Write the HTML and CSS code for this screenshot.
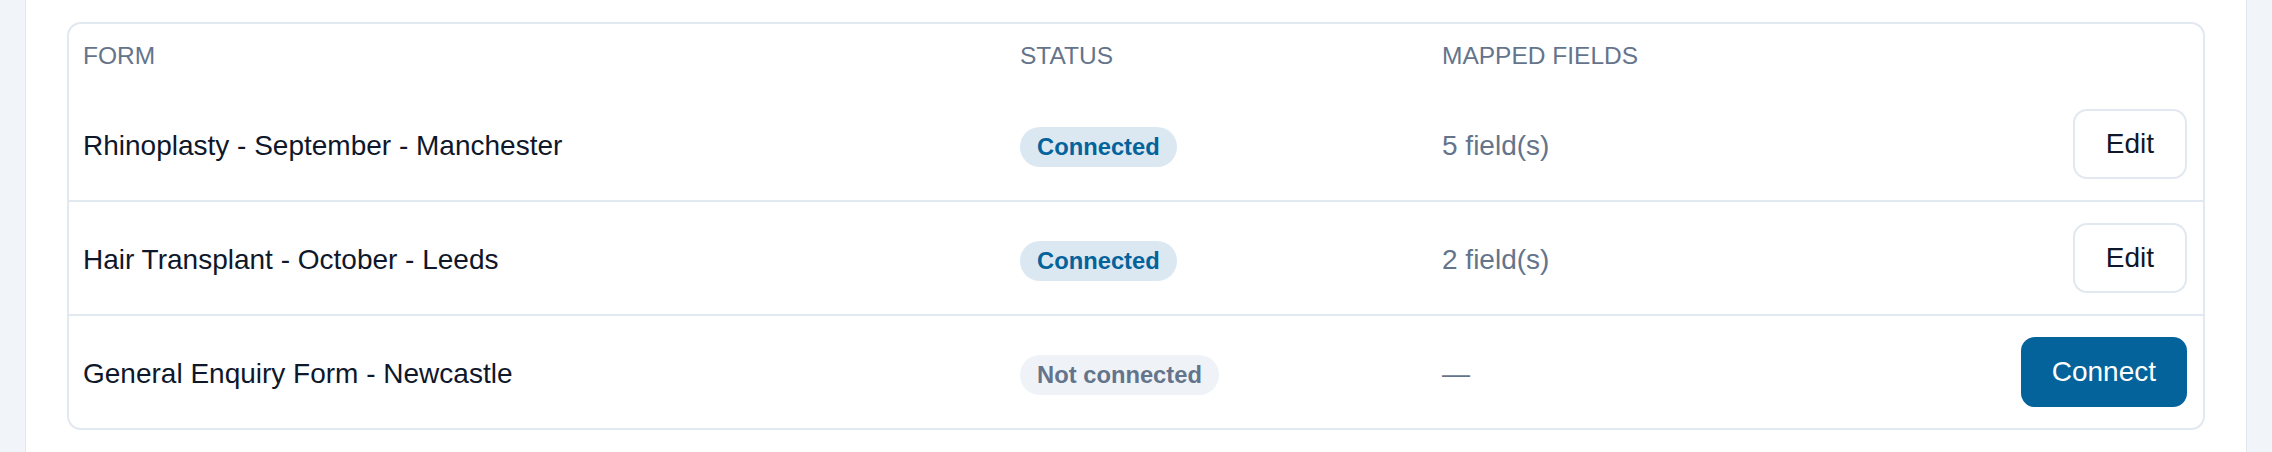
FILE: index.html
```html
<!DOCTYPE html>
<html lang="en">
<head>
<meta charset="utf-8">
<title>Form mappings</title>
<link rel="stylesheet" href="styles.css">
</head>
<body>
<main class="panel">
  <section class="card">
    <div class="row head">
      <div class="cell">Form</div>
      <div class="cell">Status</div>
      <div class="cell">Mapped fields</div>
      <div class="cell"></div>
    </div>
    <div class="row">
      <div class="cell name">Rhinoplasty - September - Manchester</div>
      <div class="cell status"><span class="badge on">Connected</span></div>
      <div class="cell muted">5 field(s)</div>
      <div class="cell action"><button class="btn">Edit</button></div>
    </div>
    <div class="row">
      <div class="cell name">Hair Transplant - October - Leeds</div>
      <div class="cell status"><span class="badge on">Connected</span></div>
      <div class="cell muted">2 field(s)</div>
      <div class="cell action"><button class="btn">Edit</button></div>
    </div>
    <div class="row">
      <div class="cell name">General Enquiry Form - Newcastle</div>
      <div class="cell status"><span class="badge off">Not connected</span></div>
      <div class="cell muted">—</div>
      <div class="cell action"><button class="btn primary">Connect</button></div>
    </div>
  </section>
</main>
</body>
</html>
```
FILE: styles.css
```css
* { box-sizing: border-box; }

html, body {
  margin: 0;
  height: 100%;
}

body {
  background: #f1f5f9;
  padding: 0 25px;
  font-family: "Liberation Sans", Arial, sans-serif;
  color: #0f172a;
}

.panel {
  background: #ffffff;
  border-left: 1px solid #e2e8f0;
  border-right: 1px solid #e2e8f0;
  min-height: 100%;
  padding: 22px 41px;
}

.card {
  border: 2px solid #e2e8f0;
  border-radius: 14px;
  background: #ffffff;
}

.row {
  display: grid;
  grid-template-columns: 937px 422px 1fr auto;
  align-items: center;
}

.row + .row:not(:nth-child(2)) {
  border-top: 2px solid #e2e8f0;
}

.cell {
  padding: 23px 14px 19px;
  font-size: 28px;
  line-height: 32px;
}

.cell.status {
  padding-top: 24px;
  padding-bottom: 18px;
}

.cell.action {
  padding: 21px 16px 21px 14px;
}

.head .cell {
  padding-top: 18px;
  padding-bottom: 19px;
  font-size: 24.5px;
  line-height: 27px;
  text-transform: uppercase;
  color: #64748b;
}

.muted {
  color: #64748b;
}

.action {
  display: flex;
  justify-content: flex-end;
}

.badge {
  display: inline-block;
  font-size: 23.75px;
  line-height: 26px;
  font-weight: 700;
  padding: 7px 17px;
  border-radius: 999px;
}

.badge.on {
  background: #dbe8f2;
  color: #03639a;
}

.badge.off {
  background: #eff3f8;
  color: #64748b;
}

.btn {
  font-family: "Liberation Sans", Arial, sans-serif;
  font-size: 28px;
  line-height: 32px;
  padding: 17px 31px;
  border: 2px solid #e2e8f0;
  border-radius: 14px;
  background: #ffffff;
  color: #0f172a;
  cursor: pointer;
}

.btn.primary {
  padding-left: 29px;
  padding-right: 29px;
  background: #03639a;
  border-color: #03639a;
  color: #ffffff;
}
```
